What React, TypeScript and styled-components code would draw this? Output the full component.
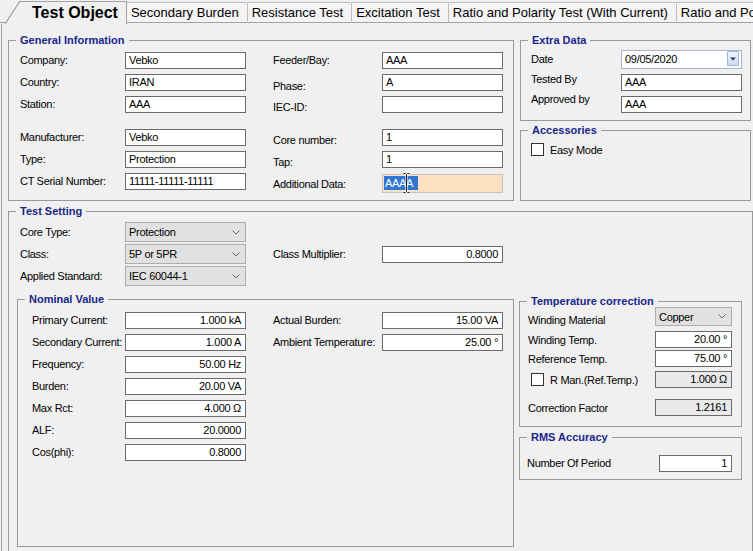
import React from "react";
import styled, { createGlobalStyle } from "styled-components";

const FONT = `"Liberation Sans", Arial, sans-serif`;

const GlobalStyle = createGlobalStyle`
  html, body { margin: 0; padding: 0; background: #f0f0f0; }
  body { font-family: ${FONT}; font-size: 11px; color: #000; }
`;

const Window = styled.div`
  width: 753px;
  height: 551px;
  overflow: hidden;
  background: #f0f0f0;
  display: flex;
  flex-direction: column;
  font-family: ${FONT};
  font-size: 11px;
  color: #000;
`;

/* ---------- tabs ---------- */
const TabStrip = styled.div`
  display: flex;
  align-items: flex-end;
  height: 24px;
  flex: none;
  overflow: hidden;
  white-space: nowrap;
`;

const StripLead = styled.div`
  flex: none;
  width: 20px;
  height: 0;
  border-bottom: 1px solid #a3a3a3;
  margin-bottom: 1px;
`;

const ActiveTab = styled.div`
  position: relative;
  flex: none;
  box-sizing: border-box;
  height: 23px;
  padding: 0 8px 0 12px;
  background: #f0f0f0;
  border-top: 1px solid #a3a3a3;
  border-right: 1px solid #a3a3a3;
  font: bold 16px/22px ${FONT};
  &::before {
    content: "";
    position: absolute;
    left: -15px;
    top: -1px;
    bottom: 0;
    width: 15px;
    background: linear-gradient(
      to bottom right,
      transparent calc(50% - 0.9px),
      #a3a3a3 calc(50% - 0.3px),
      #a3a3a3 calc(50% + 0.3px),
      #f0f0f0 calc(50% + 0.9px)
    );
  }
`;

const Tab = styled.div`
  flex: none;
  box-sizing: border-box;
  height: 21px;
  margin-bottom: 1px;
  padding: 0 8px 0 4px;
  background: #f4f4f4;
  border-top: 1px solid #bcbcbc;
  border-right: 1px solid #bcbcbc;
  border-bottom: 1px solid #a3a3a3;
  border-top-right-radius: 2px;
  font: 13px/19px ${FONT};
`;

/* ---------- page ---------- */
const TabPage = styled.div`
  flex: 1;
  margin-left: 1px;
  border-left: 1px solid #a3a3a3;
  padding: 10px 0 0 6px;
  display: flex;
  flex-direction: column;
`;

const TopRow = styled.div`
  display: grid;
  grid-template-columns: 506px 231px;
  column-gap: 6px;
`;

const RightStack = styled.div`
  display: flex;
  flex-direction: column;
  gap: 3px;
`;

const Group = styled.fieldset<{ $grow?: boolean; $mt?: number; $w?: number }>`
  margin: ${(p) => p.$mt ?? 0}px 0 0 0;
  padding: 0;
  min-width: 0;
  box-sizing: border-box;
  border: 1px solid #999;
  ${(p) => (p.$grow ? "flex: 1;" : "")}
  ${(p) => (p.$w ? `width: ${p.$w}px;` : "")}
`;

const Legend = styled.legend`
  margin-left: 7px;
  padding: 0 4px;
  font: bold 11px/13px ${FONT};
  color: #18268c;
`;

const Body = styled.div<{ $pad: string }>`
  padding: ${(p) => p.$pad};
`;

const FormGrid = styled.div<{ $cols: string; $row?: number; $rows?: string; $gap: number; $mt?: number; $ml?: number }>`
  display: grid;
  grid-template-columns: ${(p) => p.$cols};
  ${(p) => (p.$rows ? `grid-template-rows: ${p.$rows};` : `grid-auto-rows: ${p.$row}px;`)}
  row-gap: ${(p) => p.$gap}px;
  margin-top: ${(p) => p.$mt ?? 0}px;
  margin-left: ${(p) => p.$ml ?? 0}px;
`;

const Label = styled.span<{ $inset?: number; $dy?: number; $start?: boolean }>`
  display: flex;
  align-items: center;
  min-width: 0;
  white-space: nowrap;
  letter-spacing: -0.3px;
  line-height: 13px;
  padding-left: ${(p) => p.$inset ?? 0}px;
  ${(p) =>
    (p.$dy ?? 0) >= 0
      ? `padding-top: ${2 * (p.$dy ?? 0)}px;`
      : `padding-bottom: ${-2 * (p.$dy ?? 0)}px;`}
  ${(p) => (p.$start ? "grid-column-start: 1;" : "")}
  flex: 1;
`;

type Tone = "white" | "gray" | "peach";

const Field = styled.div<{ $right?: boolean; $tone?: Tone; $h?: number; $w?: number; $mt?: number }>`
  position: relative;
  box-sizing: border-box;
  flex: none;
  height: ${(p) => p.$h ?? 17}px;
  ${(p) => (p.$w ? `width: ${p.$w}px;` : "")}
  align-self: ${(p) => (p.$mt !== undefined ? "start" : "center")};
  margin-top: ${(p) => p.$mt ?? 0}px;
  border: 1px solid ${(p) => (p.$tone === "peach" ? "#c4c4c4" : "#6a6a6a")};
  background: ${(p) => (p.$tone === "gray" ? "#e9e9e9" : p.$tone === "peach" ? "#fddfc1" : "#fff")};
  padding: ${(p) => (p.$tone === "peach" ? "0 1px" : p.$right ? "0 4px 0 3px" : "0 3px")};
  text-align: ${(p) => (p.$right ? "right" : "left")};
  line-height: ${(p) => (p.$h ?? 17) - 2}px;
  letter-spacing: -0.3px;
  white-space: nowrap;
`;

const Selected = styled.span`
  display: inline-block;
  margin-top: 1px;
  padding: 0 5px 0 1px;
  line-height: 14px;
  background: #2f76d2;
  color: #fff;
  vertical-align: top;
`;

const IBeam = styled.svg`
  position: absolute;
  left: 20px;
  top: -2px;
  pointer-events: none;
`;

const Select = styled.div<{ $w?: number; $h?: number }>`
  box-sizing: border-box;
  flex: none;
  align-self: center;
  height: ${(p) => p.$h ?? 20}px;
  ${(p) => (p.$w ? `width: ${p.$w}px;` : "")}
  display: flex;
  align-items: center;
  justify-content: space-between;
  border: 1px solid #adadad;
  background: #e1e1e1;
  padding: 0 5px 0 3px;
  letter-spacing: -0.3px;
  white-space: nowrap;
`;

const DateBox = styled.div`
  box-sizing: border-box;
  height: 19px;
  border: 1px solid #a9b6c8;
  background: #fff;
  display: flex;
  justify-content: space-between;
  align-items: flex-start;
  padding-left: 3px;
  line-height: 17px;
  letter-spacing: -0.3px;
`;

const DropButton = styled.span`
  box-sizing: border-box;
  width: 12px;
  height: 15px;
  margin: 0 2px 0 0;
  border: 1px solid #9db7da;
  border-radius: 1px;
  background: linear-gradient(#f1f6fd, #cadcf2);
  display: flex;
  align-items: center;
  justify-content: center;
`;

const CheckRow = styled.div<{ $ml?: number }>`
  display: flex;
  align-items: center;
  gap: 6px;
  flex: 1;
  margin-left: ${(p) => p.$ml ?? 0}px;
  letter-spacing: -0.3px;
  white-space: nowrap;
`;

const CheckBox = styled.span`
  flex: none;
  box-sizing: border-box;
  width: 13px;
  height: 13px;
  border: 1px solid #333;
  background: #fff;
`;

const BottomGrid = styled.div`
  display: grid;
  grid-template-columns: 497px 223px;
  column-gap: 5px;
  margin-top: 7px;
  align-items: start;
`;

const SideStack = styled.div`
  display: flex;
  flex-direction: column;
  padding-top: 2px;
`;

const Row = styled.div<{ $mt?: number }>`
  display: flex;
  align-items: stretch;
  margin-top: ${(p) => p.$mt ?? 0}px;
`;

const Chevron = () => (
  <svg width="8" height="5" viewBox="0 0 8 5">
    <path d="M0.5 0.5 L4 4 L7.5 0.5" fill="none" stroke="#6a6a6a" strokeWidth="1" />
  </svg>
);

const DownTriangle = () => (
  <svg width="6" height="4" viewBox="0 0 6 4">
    <path d="M0 0.5 H6 L3 3.5 Z" fill="#233c6a" />
  </svg>
);

const GEN_COLS = "105px 121px 136px 121px";
const NOM_COLS = "93px 121px 136px 121px";

export default function App() {
  return (
    <>
      <GlobalStyle />
      <Window>
        <TabStrip>
          <StripLead />
          <ActiveTab>Test Object</ActiveTab>
          {[
            "Secondary Burden",
            "Resistance Test",
            "Excitation Test",
            "Ratio and Polarity Test (With Current)",
            "Ratio and Polarity Test (With Voltage)",
          ].map((t) => (
            <Tab key={t}>{t}</Tab>
          ))}
        </TabStrip>

        <TabPage>
          <TopRow>
            <Group>
              <Legend>General Information</Legend>
              <Body $pad="5px 0 10px 11px">
                <FormGrid $cols={GEN_COLS} $row={17} $gap={5}>
                  <Label>Company:</Label>
                  <Field>Vebko</Field>
                  <Label $inset={27}>Feeder/Bay:</Label>
                  <Field>AAA</Field>
                  <Label>Country:</Label>
                  <Field>IRAN</Field>
                  <Label $inset={27} $dy={3.5}>Phase:</Label>
                  <Field>A</Field>
                  <Label>Station:</Label>
                  <Field>AAA</Field>
                  <Label $inset={27} $dy={3}>IEC-ID:</Label>
                  <Field />
                </FormGrid>
                <FormGrid $cols={GEN_COLS} $row={17} $gap={5} $mt={16}>
                  <Label>Manufacturer:</Label>
                  <Field>Vebko</Field>
                  <Label $inset={27} $dy={3}>Core number:</Label>
                  <Field>1</Field>
                  <Label>Type:</Label>
                  <Field>Protection</Field>
                  <Label $inset={27} $dy={3}>Tap:</Label>
                  <Field>1</Field>
                  <Label>CT Serial Number:</Label>
                  <Field>11111-11111-11111</Field>
                  <Label $inset={27} $dy={3}>Additional Data:</Label>
                  <Field $tone="peach" $h={19} $mt={1}>
                    <Selected>AAAA</Selected>
                    <IBeam width="7" height="20" viewBox="0 0 7 20">
                      <path
                        d="M0.5 0.5 H2.5 L3.5 1.5 L4.5 0.5 H6.5 M3.5 1.5 V18.5 M0.5 19.5 H2.5 L3.5 18.5 L4.5 19.5 H6.5"
                        fill="none"
                        stroke="#fff"
                        strokeWidth="2.2"
                      />
                      <path
                        d="M0.5 0.5 H2.5 L3.5 1.5 L4.5 0.5 H6.5 M3.5 1.5 V18.5 M0.5 19.5 H2.5 L3.5 18.5 L4.5 19.5 H6.5"
                        fill="none"
                        stroke="#222"
                        strokeWidth="1"
                      />
                    </IBeam>
                  </Field>
                </FormGrid>
              </Body>
            </Group>

            <RightStack>
              <Group>
                <Legend>Extra Data</Legend>
                <Body $pad="3px 0 7px 10px">
                  <FormGrid $cols="90px 121px" $rows="19px 17px 17px" $gap={5}>
                    <Label>Date</Label>
                    <DateBox>
                      09/05/2020
                      <DropButton>
                        <DownTriangle />
                      </DropButton>
                    </DateBox>
                    <Label $dy={-3}>Tested By</Label>
                    <Field>AAA</Field>
                    <Label $dy={-5}>Approved by</Label>
                    <Field>AAA</Field>
                  </FormGrid>
                </Body>
              </Group>
              <Group $grow>
                <Legend>Accessories</Legend>
                <Body $pad="6px 0 0 10px">
                  <CheckRow>
                    <CheckBox />
                    Easy Mode
                  </CheckRow>
                </Body>
              </Group>
            </RightStack>
          </TopRow>

          <Group $mt={4}>
            <Legend>Test Setting</Legend>
            <Body $pad="4px 0 8px 8px">
              <FormGrid $cols={GEN_COLS} $row={20} $gap={2} $ml={3}>
                <Label $start>Core Type:</Label>
                <Select>
                  Protection
                  <Chevron />
                </Select>
                <Label $start>Class:</Label>
                <Select>
                  5P or 5PR
                  <Chevron />
                </Select>
                <Label $inset={27}>Class Multiplier:</Label>
                <Field $right>0.8000</Field>
                <Label $start>Applied Standard:</Label>
                <Select>
                  IEC 60044-1
                  <Chevron />
                </Select>
              </FormGrid>

              <BottomGrid>
                <Group>
                  <Legend>Nominal Value</Legend>
                  <Body $pad="6px 0 85px 14px">
                    <FormGrid $cols={NOM_COLS} $row={17} $gap={5}>
                      <Label $start>Primary Current:</Label>
                      <Field $right>1.000 kA</Field>
                      <Label $inset={27}>Actual Burden:</Label>
                      <Field $right>15.00 VA</Field>
                      <Label $start>Secondary Current:</Label>
                      <Field $right>1.000 A</Field>
                      <Label $inset={27}>Ambient Temperature:</Label>
                      <Field $right>25.00 °</Field>
                      <Label $start>Frequency:</Label>
                      <Field $right>50.00 Hz</Field>
                      <Label $start>Burden:</Label>
                      <Field $right>20.00 VA</Field>
                      <Label $start>Max Rct:</Label>
                      <Field $right>4.000 Ω</Field>
                      <Label $start>ALF:</Label>
                      <Field $right>20.0000</Field>
                      <Label $start>Cos(phi):</Label>
                      <Field $right>0.8000</Field>
                    </FormGrid>
                  </Body>
                </Group>

                <SideStack>
                  <Group>
                    <Legend>Temperature correction</Legend>
                    <Body $pad="0 9px 10px 8px">
                      <Row $mt={-2}>
                        <Label $dy={4}>Winding Material</Label>
                        <Select $w={77} $h={19}>
                          Copper
                          <Chevron />
                        </Select>
                      </Row>
                      <Row $mt={4}>
                        <Label $dy={1}>Winding Temp.</Label>
                        <Field $right $w={77}>20.00 °</Field>
                      </Row>
                      <Row $mt={2}>
                        <Label $dy={1}>Reference Temp.</Label>
                        <Field $right $w={77}>75.00 °</Field>
                      </Row>
                      <Row $mt={4}>
                        <CheckRow $ml={3}>
                          <CheckBox />
                          R Man.(Ref.Temp.)
                        </CheckRow>
                        <Field $right $w={77} $tone="gray">1.000 Ω</Field>
                      </Row>
                      <Row $mt={11}>
                        <Label $dy={0.5}>Correction Factor</Label>
                        <Field $right $w={77} $tone="gray">1.2161</Field>
                      </Row>
                    </Body>
                  </Group>
                  <Group $mt={4}>
                    <Legend>RMS Accuracy</Legend>
                    <Body $pad="11px 9px 7px 7px">
                      <Row>
                        <Label>Number Of Period</Label>
                        <Field $right $w={73}>1</Field>
                      </Row>
                    </Body>
                  </Group>
                </SideStack>
              </BottomGrid>
            </Body>
          </Group>
        </TabPage>
      </Window>
    </>
  );
}
